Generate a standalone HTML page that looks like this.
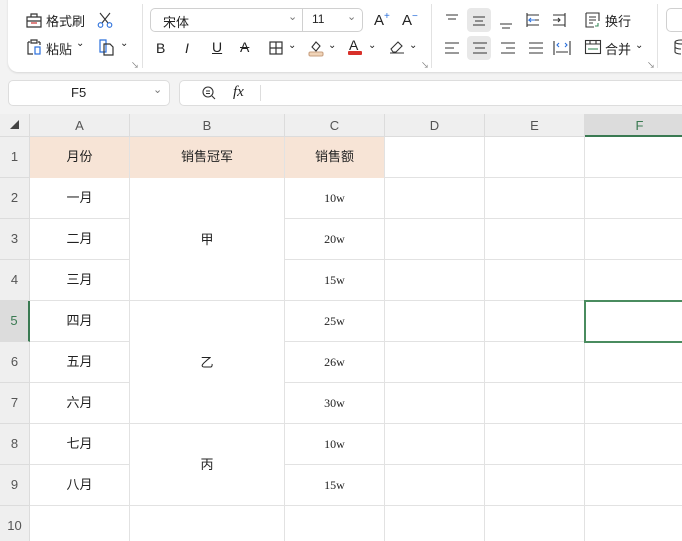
<!DOCTYPE html>
<html><head><meta charset="utf-8"><style>
*{margin:0;padding:0;box-sizing:border-box}
html,body{width:682px;height:541px;overflow:hidden}
body{background:#f3f3f3;font-family:"Liberation Sans","Noto Sans CJK SC",sans-serif;position:relative;color:#222}
.abs{position:absolute}
.panel{left:8px;top:-10px;width:700px;height:82px;background:#fff;border-radius:10px;box-shadow:0 1px 2px rgba(0,0,0,.12)}
.t{position:absolute;font-size:13px;color:#222;white-space:nowrap}
.sep{position:absolute;width:1px;background:#e2e2e2}
.grid{left:0;top:114px;width:682px;height:427px;background:#fff}
.ch{position:absolute;top:114px;height:23px;background:#efefef;border-right:1px solid #dcdcdc;border-bottom:1px solid #dcdcdc;font-size:13px;color:#555;text-align:center;line-height:23px}
.rh{position:absolute;left:0;width:30px;background:#efefef;border-bottom:1px solid #dcdcdc;border-right:1px solid #dcdcdc;font-size:13px;color:#555;text-align:center;line-height:40px}
.c{position:absolute;border-right:1px solid #e2e2e2;border-bottom:1px solid #e2e2e2;text-align:center;font-size:13px;line-height:40px;color:#222;background:#fff}
.n{font-family:"Liberation Serif",serif;font-size:12px}
</style></head><body>
<div class="abs panel"></div>
<svg class="abs" style="left:25px;top:11px" width="18" height="18" viewBox="0 0 18 18" fill="none" stroke="#333" stroke-width="1.2"><path d="M2 6h14v10H2z M6 6V3h6v3 M2 10h14"/><path d="M6 12h6" stroke="#c33"/></svg>
<div class="t" style="left:46px;top:11px">格式刷</div>
<svg class="abs" style="left:96px;top:11px" width="18" height="18" viewBox="0 0 18 18" fill="none" stroke="#333" stroke-width="1.1"><path d="M4 2l8 10M14 2L6 12"/><circle cx="4.5" cy="14" r="2.3" stroke="#2a6fdb"/><circle cx="13.5" cy="14" r="2.3" stroke="#2a6fdb"/></svg>
<svg class="abs" style="left:25px;top:38px" width="18" height="18" viewBox="0 0 18 18" fill="none" stroke="#333" stroke-width="1.2"><path d="M3 4h2M13 4h2M3 4v12h5M15 4v3M6 2h6v3H6z"/><rect x="10" y="9" width="5" height="7" stroke="#2a6fdb"/></svg>
<div class="t" style="left:46px;top:39px">粘贴</div><div class="t" style="left:76px;top:38px;font-size:10px">⌄</div>
<svg class="abs" style="left:98px;top:38px" width="20" height="18" viewBox="0 0 20 18" fill="none" stroke-width="1.2"><path d="M2 2h6v12H2z" stroke="#2a6fdb"/><path d="M6 6h6l3 3v8H6z" stroke="#333"/></svg>
<div class="t" style="left:120px;top:38px;font-size:10px">⌄</div>
<div class="t" style="left:131px;top:60px;font-size:8px;color:#777">↘</div>
<div class="sep" style="left:142px;top:4px;height:64px"></div>
<div class="abs" style="left:150px;top:8px;width:213px;height:24px;border:1px solid #d0d0d0;border-radius:5px"></div>
<div class="abs" style="left:302px;top:8px;width:1px;height:24px;background:#d0d0d0"></div>
<div class="t" style="left:163px;top:12px">宋体</div>
<div class="t" style="left:288px;top:10px;font-size:11px;color:#777">⌄</div>
<div class="t" style="left:312px;top:12px;font-size:12px">11</div>
<div class="t" style="left:347px;top:10px;font-size:11px;color:#777">⌄</div>
<div class="t" style="left:374px;top:11px;font-size:15px">A<sup style="font-size:10px;color:#2a6fdb">+</sup></div>
<div class="t" style="left:402px;top:11px;font-size:15px">A<sup style="font-size:10px;color:#2a6fdb">−</sup></div>
<div class="t" style="left:156px;top:40px;font-size:14px">B</div>
<div class="t" style="left:185px;top:40px;font-size:14px;font-style:italic">I</div>
<div class="t" style="left:212px;top:39px;font-size:14px;text-decoration:underline">U</div>
<div class="t" style="left:240px;top:39px;font-size:14px;text-decoration:line-through">A</div>
<svg class="abs" style="left:268px;top:40px" width="16" height="16" viewBox="0 0 16 16" fill="none" stroke="#333" stroke-width="1.2"><rect x="2" y="2" width="12" height="12"/><path d="M8 2v12M2 8h12"/></svg>
<div class="t" style="left:288px;top:40px;font-size:10px">⌄</div>
<svg class="abs" style="left:308px;top:39px" width="16" height="18" viewBox="0 0 16 18" fill="none" stroke="#333" stroke-width="1.1"><path d="M4 8l4-5 4 4-4 5z"/><rect x="1" y="13" width="14" height="4" rx="1.5" fill="#f0d4b8" stroke="#c9a080"/></svg>
<div class="t" style="left:328px;top:40px;font-size:10px">⌄</div>
<div class="t" style="left:349px;top:37px;font-size:14px">A</div><div class="abs" style="left:348px;top:51px;width:14px;height:4px;background:#d8302a;border-radius:1px"></div>
<div class="t" style="left:368px;top:40px;font-size:10px">⌄</div>
<svg class="abs" style="left:388px;top:39px" width="18" height="16" viewBox="0 0 18 16" fill="none" stroke="#333" stroke-width="1.1"><path d="M3 10l7-7 4 4-6 6H5z M2 14h14"/></svg>
<div class="t" style="left:409px;top:40px;font-size:10px">⌄</div>
<div class="t" style="left:421px;top:60px;font-size:8px;color:#777">↘</div>
<div class="sep" style="left:431px;top:4px;height:64px"></div>
<div class="abs" style="left:467px;top:8px;width:24px;height:24px;background:#e8e8e8;border-radius:4px"></div>
<div class="abs" style="left:467px;top:36px;width:24px;height:24px;background:#e8e8e8;border-radius:4px"></div>
<svg class="abs" style="left:440px;top:10px" width="180" height="48" viewBox="0 0 180 48" fill="none" stroke="#333" stroke-width="1.1">
<path d="M6 5h12M8 9h8"/><path d="M33 10h12M35 14h8M33 18h12" transform="translate(0,-3)"/><path d="M62 14h12M64 18h8" transform="translate(-2,0)"/>
<path d="M87 3v14M87 5h12M87 15h12M92 10h7" stroke="#333"/><path d="M95 10h-6l2-2M89 10l2 2" stroke="#2a6fdb"/>
<path d="M113 5h12M113 15h12M113 10h7M118 8l2 2-2 2" stroke="#333"/><path d="M125 3v14" stroke="#333"/>
<path d="M5 33h14M5 38h9M5 43h14"/><path d="M33 33h14M35 38h10M33 43h14"/><path d="M61 33h14M66 38h9M61 43h14"/><path d="M89 33h14M89 38h14M89 43h14"/>
<path d="M114 31v14M130 31v14M116 42h12"/><path d="M119 33l-2 2 2 2M125 33l2 2-2 2" stroke="#2a6fdb"/>
</svg>
<svg class="abs" style="left:584px;top:11px" width="18" height="18" viewBox="0 0 18 18" fill="none" stroke="#333" stroke-width="1.1"><path d="M2 2h13v8M2 2v14h8M5 6h7M5 9h7M5 12h4"/><path d="M14 12v3h-3" stroke="#3a8a5a"/></svg>
<div class="t" style="left:605px;top:11px">换行</div>
<svg class="abs" style="left:584px;top:39px" width="18" height="16" viewBox="0 0 18 16" fill="none" stroke="#333" stroke-width="1.1"><rect x="1.5" y="1.5" width="15" height="13"/><path d="M1.5 5h15M6 1.5v3.5M12 1.5v3.5"/><path d="M4 10h10" stroke="#3a8a5a"/></svg>
<div class="t" style="left:605px;top:39px">合并</div><div class="t" style="left:635px;top:40px;font-size:10px">⌄</div>
<div class="t" style="left:647px;top:60px;font-size:8px;color:#777">↘</div>
<div class="sep" style="left:657px;top:4px;height:64px"></div>
<div class="abs" style="left:666px;top:8px;width:30px;height:24px;border:1px solid #d0d0d0;border-radius:5px"></div>
<svg class="abs" style="left:673px;top:39px" width="12" height="16" viewBox="0 0 12 16" fill="none" stroke="#333" stroke-width="1.1"><ellipse cx="8" cy="3" rx="6" ry="2"/><path d="M2 3v10M2 8c0 1 3 2 6 2M2 13c0 1 3 2 6 2"/></svg>
<div class="abs" style="left:8px;top:80px;width:162px;height:26px;background:#fff;border:1px solid #ddd;border-radius:5px"></div>
<div class="t" style="left:71px;top:85px;font-size:13px">F5</div>
<div class="t" style="left:153px;top:83px;font-size:11px;color:#777">⌄</div>
<div class="abs" style="left:179px;top:80px;width:520px;height:26px;background:#fff;border:1px solid #ddd;border-radius:5px"></div>
<svg class="abs" style="left:201px;top:85px" width="16" height="16" viewBox="0 0 16 16" fill="none" stroke="#333" stroke-width="1.1"><circle cx="7" cy="7" r="5"/><path d="M5 6h4M5 8.5h4M11 11l3 3"/></svg>
<div class="t" style="left:233px;top:84px;font-family:'Liberation Serif',serif;font-style:italic;font-size:15px">fx</div>
<div class="abs" style="left:260px;top:85px;width:1px;height:16px;background:#ddd"></div>
<div class="abs grid"></div>
<div class="ch" style="left:0;width:30px;font-size:9px;color:#444;text-align:left;padding-left:10px">◢</div>
<div class="ch" style="left:30px;width:100px">A</div>
<div class="ch" style="left:130px;width:155px">B</div>
<div class="ch" style="left:285px;width:100px">C</div>
<div class="ch" style="left:385px;width:100px">D</div>
<div class="ch" style="left:485px;width:100px">E</div>
<div class="ch" style="left:585px;width:110px;background:#dcdcdc;color:#3a7a52;border-bottom:2px solid #3a7a52">F</div>
<div class="rh" style="top:137px;height:41px">1</div>
<div class="rh" style="top:178px;height:41px">2</div>
<div class="rh" style="top:219px;height:41px">3</div>
<div class="rh" style="top:260px;height:41px">4</div>
<div class="rh" style="top:301px;height:41px;background:#dcdcdc;color:#3a7a52;border-right:2px solid #3a7a52">5</div>
<div class="rh" style="top:342px;height:41px">6</div>
<div class="rh" style="top:383px;height:41px">7</div>
<div class="rh" style="top:424px;height:41px">8</div>
<div class="rh" style="top:465px;height:41px">9</div>
<div class="rh" style="top:506px;height:41px">10</div>
<div class="c" style="left:30px;top:137px;width:100px;height:42px;background:#f7e4d6">月份</div>
<div class="c" style="left:130px;top:137px;width:155px;height:42px;background:#f7e4d6">销售冠军</div>
<div class="c" style="left:285px;top:137px;width:100px;height:42px;background:#f7e4d6">销售额</div>
<div class="c" style="left:385px;top:137px;width:100px;height:41px"></div>
<div class="c" style="left:485px;top:137px;width:100px;height:41px"></div>
<div class="c" style="left:585px;top:137px;width:110px;height:41px"></div>
<div class="c" style="left:30px;top:178px;width:100px;height:41px">一月</div>
<div class="c" style="left:30px;top:219px;width:100px;height:41px">二月</div>
<div class="c" style="left:30px;top:260px;width:100px;height:41px">三月</div>
<div class="c" style="left:30px;top:301px;width:100px;height:41px">四月</div>
<div class="c" style="left:30px;top:342px;width:100px;height:41px">五月</div>
<div class="c" style="left:30px;top:383px;width:100px;height:41px">六月</div>
<div class="c" style="left:30px;top:424px;width:100px;height:41px">七月</div>
<div class="c" style="left:30px;top:465px;width:100px;height:41px">八月</div>
<div class="c" style="left:30px;top:506px;width:100px;height:41px"></div>
<div class="c" style="left:130px;top:178px;width:155px;height:123px;line-height:123px">甲</div>
<div class="c" style="left:130px;top:301px;width:155px;height:123px;line-height:123px">乙</div>
<div class="c" style="left:130px;top:424px;width:155px;height:82px;line-height:82px">丙</div>
<div class="c" style="left:130px;top:506px;width:155px;height:41px"></div>
<div class="c n" style="left:285px;top:178px;width:100px;height:41px">10w</div>
<div class="c n" style="left:285px;top:219px;width:100px;height:41px">20w</div>
<div class="c n" style="left:285px;top:260px;width:100px;height:41px">15w</div>
<div class="c n" style="left:285px;top:301px;width:100px;height:41px">25w</div>
<div class="c n" style="left:285px;top:342px;width:100px;height:41px">26w</div>
<div class="c n" style="left:285px;top:383px;width:100px;height:41px">30w</div>
<div class="c n" style="left:285px;top:424px;width:100px;height:41px">10w</div>
<div class="c n" style="left:285px;top:465px;width:100px;height:41px">15w</div>
<div class="c" style="left:285px;top:506px;width:100px;height:41px"></div>
<div class="abs" style="left:385px;top:178px;width:297px;height:363px;background:repeating-linear-gradient(to bottom,transparent 0 40px,#e2e2e2 40px 41px)"></div>
<div class="abs" style="left:484px;top:178px;width:1px;height:363px;background:#e2e2e2"></div>
<div class="abs" style="left:584px;top:137px;width:1px;height:404px;background:#e2e2e2"></div>
<div class="abs" style="left:484px;top:137px;width:1px;height:41px;background:#e2e2e2"></div>
<div class="abs" style="left:584px;top:300px;width:110px;height:43px;border:2px solid #4a8c5f"></div>
</body></html>
